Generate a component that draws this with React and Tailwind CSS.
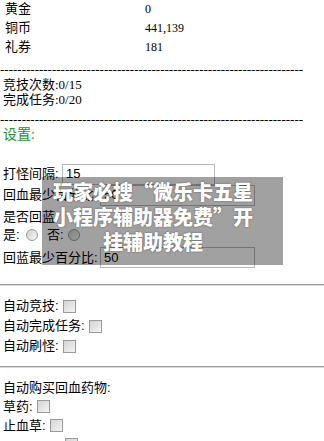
import React from "react";

const serif = "font-['Liberation_Serif','Noto_Sans_CJK_SC',serif]";
const sans = "font-['Liberation_Sans','Noto_Sans_CJK_SC',sans-serif]";

function Box() {
  return (
    <span className="ml-[4px] inline-block w-[13px] h-[13px] border border-[#9a9a9a] bg-gradient-to-br from-[#d4d4d4] to-[#f4f4f4] shrink-0" />
  );
}

function Radio() {
  return (
    <span className="inline-block w-[12px] h-[12px] rounded-full border border-[#9a9a9a] bg-gradient-to-br from-[#cfcfcf] to-[#f7f7f7] shrink-0" />
  );
}

const DASHES = "-".repeat(70);

export default function App() {
  return (
    <div className="relative w-[324px] h-[441px] overflow-hidden bg-white text-black">
      <div className={`${serif} text-[13px]`}>
        <div className="flex h-[18px] items-center">
          <span className="w-[145px] pl-[5px]">黄金</span>
          <span className="text-[12px]">0</span>
        </div>
        <div className="flex h-[19px] items-center">
          <span className="w-[145px] pl-[5px]">铜币</span>
          <span className="text-[12px]">441,139</span>
        </div>
        <div className="flex h-[19px] items-center">
          <span className="w-[145px] pl-[5px]">礼券</span>
          <span className="text-[12px]">181</span>
        </div>
        <div className="mt-[7px] h-[14px] leading-[14px] w-[303px] overflow-hidden whitespace-nowrap">{DASHES}</div>
        <div className="pl-[3px] leading-[15px]">竞技次数:0/15</div>
        <div className="pl-[3px] leading-[15px]">完成任务:0/20</div>
        <div className="mt-[6px] h-[14px] leading-[14px] w-[303px] overflow-hidden whitespace-nowrap">{DASHES}</div>
        <div className="pl-[3px] leading-[16px] text-[14px] text-[#1f8f1f]">设置:</div>
      </div>

      <div className={`${sans} text-[13px] pl-[3px]`}>
        <div className="mt-[20px] flex h-[22px] items-center">
          <span className="w-[59px]">打怪间隔:</span>
          <span className="flex h-[21px] w-[153px] items-center border border-[#b8b8b8] pl-[3px]">15</span>
        </div>
        <div className="flex h-[20px] items-center">
          <span className="w-[97px]">回血最少百分比:</span>
          <span className="flex h-[21px] w-[155px] items-center border border-[#b8b8b8] pl-[3px]">50</span>
        </div>
        <div className="mt-[4px] flex h-[16px] items-center">是否回蓝:</div>
        <div className="mt-[2px] flex h-[16px] items-center">
          <span className="w-[23px]">是:</span>
          <Radio />
          <span className="ml-[9px] w-[21px]">否:</span>
          <Radio />
        </div>
        <div className="mt-[4px] flex h-[21px] items-center">
          <span className="w-[97px]">回蓝最少百分比:</span>
          <span className="flex h-[21px] w-[155px] items-center border border-[#b8b8b8] pl-[3px]">50</span>
        </div>
      </div>

      <div className="mt-[16px] h-[2px] border-t border-[#9c9c9c] border-b-[#dcdcdc] border-b" />

      <div className={`${sans} text-[13px] pl-[3px]`}>
        <div className="mt-[10px] flex h-[20px] items-center">自动竞技:<Box /></div>
        <div className="flex h-[20px] items-center">自动完成任务:<Box /></div>
        <div className="flex h-[20px] items-center">自动刷怪:<Box /></div>
      </div>

      <div className="mt-[10px] h-[2px] border-t border-[#9c9c9c] border-b-[#dcdcdc] border-b" />

      <div className={`${sans} text-[13px] pl-[3px]`}>
        <div className="mt-[10px] flex h-[19px] items-center">自动购买回血药物:</div>
        <div className="flex h-[19px] items-center">草药:<Box /></div>
        <div className="flex h-[19px] items-center">止血草:<Box /></div>
        <div className="flex h-[19px] items-start pt-[3px]">
          <span className="w-[58px]" />
          <Box />
        </div>
      </div>

      <div className="absolute left-[42px] top-[177px] w-[241px] h-[88px] bg-black/[0.37]">
        <div className="ml-[11px] mt-[2px] w-[200px] text-center font-['Noto_Sans_CJK_SC',sans-serif] font-black text-[20px] leading-[25px] text-white whitespace-nowrap [font-feature-settings:'fwid'] [text-shadow:0_0_2px_rgba(0,0,0,0.45)]">
          玩家必搜“微乐卡五星
          <br />
          小程序辅助器免费”开
          <br />
          挂辅助教程
        </div>
      </div>
    </div>
  );
}
